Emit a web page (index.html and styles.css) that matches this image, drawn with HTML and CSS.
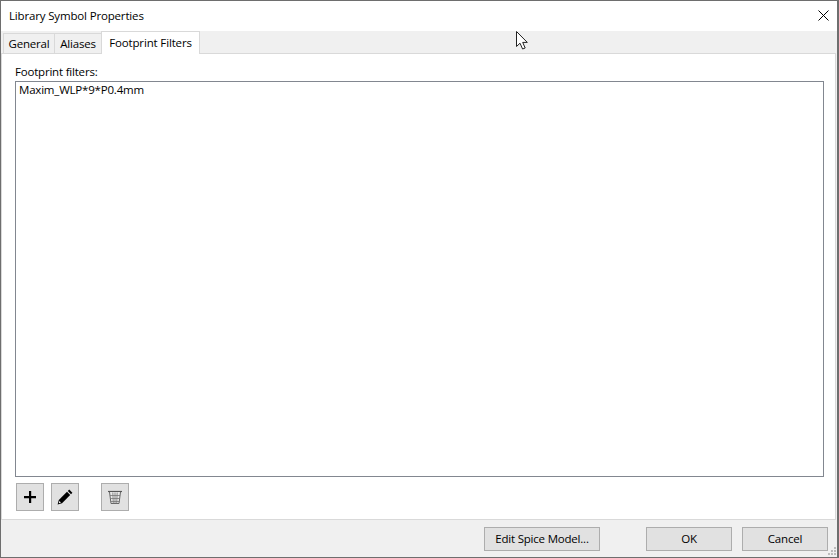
FILE: index.html
```html
<!DOCTYPE html>
<html lang="en">
<head>
    <meta charset="UTF-8">
    <meta name="viewport" content="width=device-width, initial-scale=1.0">
    <title>Library Symbol Properties</title>
    <link rel="stylesheet" href="styles.css">
</head>
<body>

    <div class="dialog">
        <!-- Title bar -->
        <header class="titlebar">
            <span class="title">Library Symbol Properties</span>
            <svg class="close" width="11" height="11" viewBox="0 0 11 11">
                <path d="M0.5 0.5L10.5 10.5M10.5 0.5L0.5 10.5" stroke="#000" stroke-width="1" fill="none"/>
            </svg>
        </header>

        <!-- Tabs -->
        <div class="tabs">
            <div class="tab tab-general">General</div>
            <div class="tab tab-aliases">Aliases</div>
            <div class="tab tab-active">Footprint Filters</div>
        </div>

        <!-- Tab page -->
        <main class="page">
            <label class="list-label">Footprint filters:</label>
            <div class="list">
                <div class="list-item">Maxim_WLP*9*P0.4mm</div>
            </div>
            <div class="tools">
                <button class="tool">
                    <svg width="16" height="16" viewBox="0 0 16 16">
                        <path d="M7 2H9.2V7H14V9.2H9.2V14H7V9.2H2V7H7Z" fill="#000"/>
                    </svg>
                </button>
                <button class="tool">
                    <svg width="18" height="18" viewBox="0 0 18 18">
                        <path d="M13.2 1.6L16.4 4.8L15 6.2L11.8 3Z" fill="#000"/>
                        <path d="M11 3.8L14.2 7L6 15.2L1.6 16.4L2.8 12Z" fill="#000"/>
                        <path d="M3.4 13L5 14.6L2.8 15.2Z" fill="#fff"/>
                    </svg>
                </button>
                <button class="tool tool-delete">
                    <svg width="16" height="16" viewBox="0 0 16 16">
                        <path d="M1 2.5H15" stroke="#555" stroke-width="1.2" fill="none"/>
                        <path d="M2.5 3L4 14.5H12L13.5 3" stroke="#666" stroke-width="1" fill="#e8e8e8"/>
                        <path d="M3 6.5H13M3.4 9.5H12.6M3.8 12.5H12.2M5.8 3.5L6.3 14.5M8 3.5V14.5M10.2 3.5L9.7 14.5" stroke="#777" stroke-width="0.8" fill="none"/>
                    </svg>
                </button>
            </div>
        </main>

        <!-- Bottom buttons -->
        <footer class="footer">
            <button class="btn btn-spice">Edit Spice Model...</button>
            <button class="btn btn-ok">OK</button>
            <button class="btn">Cancel</button>
            <svg class="grip" width="8" height="8" viewBox="0 0 8 8">
                <path d="M6 0h2v2H6zM3 3h2v2H3zM6 3h2v2H6zM0 6h2v2H0zM3 6h2v2H3zM6 6h2v2H6z" fill="#bcbcbc"/>
            </svg>
        </footer>
    </div>

    <!-- Mouse pointer caught in the screenshot -->
    <svg class="pointer" width="14" height="21" viewBox="0 0 14 21">
        <path d="M1.5 1.5V16.5L5 13.2L7.6 19L10.2 18L7.7 12.4H12.3Z" fill="#fff" stroke="#222" stroke-width="1"/>
    </svg>

</body>
</html>
```

FILE: styles.css
```css
/* General dialog */
html, body {
    margin: 0;
    height: 100%;
}

body {
    font-family: "Open Sans", "Noto Sans", sans-serif;
    font-size: 11.5px;
    letter-spacing: -0.2px;
    color: #000;
    background-color: #f0f0f0;
    overflow: hidden;
}

.dialog {
    display: flex;
    flex-direction: column;
    height: 558px;
    box-sizing: border-box;
    border: 1px solid #6e6e6e;
    border-right-width: 2px;
    background-color: #f0f0f0;
}

.titlebar {
    display: flex;
    align-items: center;
    justify-content: space-between;
    box-sizing: border-box;
    height: 30px;
    padding: 0 8px 2px 8px;
    background-color: #fff;
    flex: none;
}

.title {
    letter-spacing: -0.16px;
}

/* Tabs */
.tabs {
    display: flex;
    align-items: flex-end;
    height: 22px;
    padding-left: 2px;
    flex: none;
}

.tab {
    box-sizing: border-box;
    height: 20px;
    line-height: 19px;
    text-align: center;
    background-color: #f0f0f0;
    border: 1px solid #d9d9d9;
    border-bottom: none;
}

.tab-general {
    width: 52px;
}

.tab-aliases {
    width: 46px;
    border-left: none;
    border-right: none;
}

.tab-active {
    position: relative;
    width: 99px;
    height: 23px;
    line-height: 21px;
    letter-spacing: -0.15px;
    background-color: #fff;
    margin-bottom: -1px;
}

/* Tab page */
.page {
    flex: 1;
    display: flex;
    flex-direction: column;
    margin-right: 1px;
    padding: 11px 11px 8px 13px;
    background-color: #fff;
    border: 1px solid #d9d9d9;
    min-height: 0;
}

.list-label {
    line-height: 14px;
}

.list {
    flex: 1;
    margin-top: 2px;
    border: 1px solid #828790;
    background-color: #fff;
}

.list-item {
    padding: 0 3px 2px;
    line-height: 15px;
}

.tools {
    display: flex;
    gap: 7px;
    margin-top: 6px;
    padding-left: 1px;
}

.tool {
    display: flex;
    align-items: center;
    justify-content: center;
    width: 28px;
    height: 28px;
    padding: 0;
    background-color: #e1e1e1;
    border: 1px solid #adadad;
}

.tool-delete {
    margin-left: 15px;
}

/* Bottom buttons */
.footer {
    position: relative;
    display: flex;
    align-items: center;
    height: 37px;
    padding-right: 9px;
    justify-content: flex-end;
    flex: none;
}

.btn {
    width: 86px;
    height: 24px;
    padding: 0;
    font-family: inherit;
    font-size: inherit;
    letter-spacing: inherit;
    background-color: #e1e1e1;
    border: 1px solid #adadad;
    margin-left: 10px;
}

.btn-spice {
    width: 116px;
}

.btn-ok {
    margin-left: 46px;
}

.grip {
    position: absolute;
    right: 1px;
    bottom: 2px;
}

.pointer {
    position: absolute;
    left: 515px;
    top: 30px;
}
```
